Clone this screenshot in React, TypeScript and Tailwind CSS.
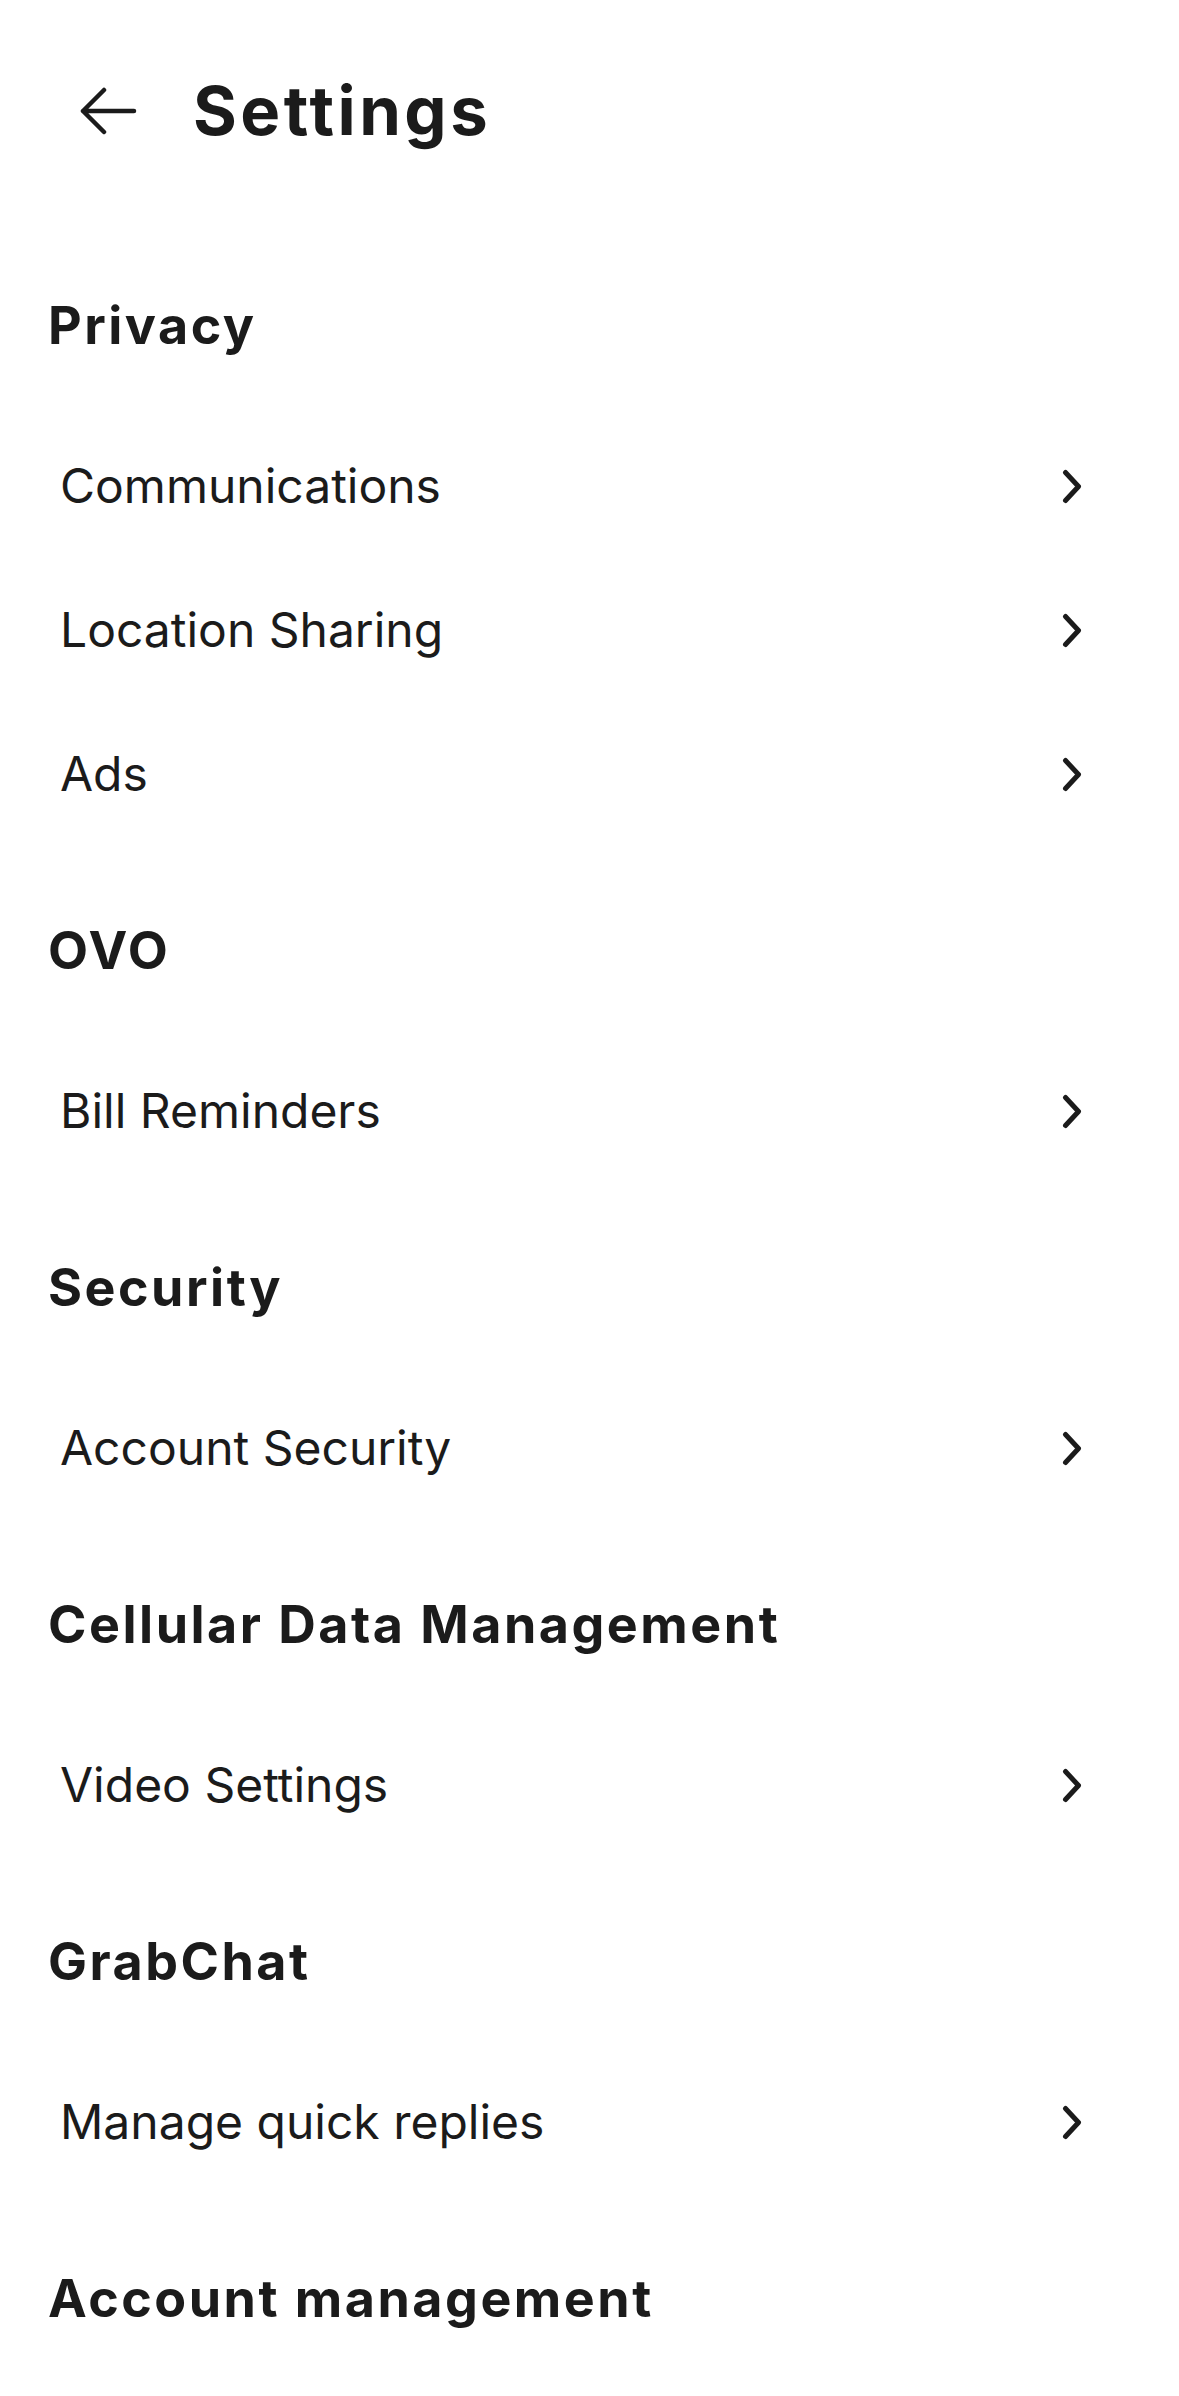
import { useState } from "react";

type Section = { title: string; items: string[] };

const sections: Section[] = [
  { title: "Privacy", items: ["Communications", "Location Sharing", "Ads"] },
  { title: "OVO", items: ["Bill Reminders"] },
  { title: "Security", items: ["Account Security"] },
  { title: "Cellular Data Management", items: ["Video Settings"] },
  { title: "GrabChat", items: ["Manage quick replies"] },
  { title: "Account management", items: [] },
];

function BackArrow() {
  return (
    <svg width="58" height="48" viewBox="0 0 58 48" fill="none" className="shrink-0">
      <path
        d="M55 24H4M4 24L25 3M4 24L25 45"
        stroke="currentColor"
        strokeWidth="4.5"
        strokeLinecap="round"
        strokeLinejoin="round"
      />
    </svg>
  );
}

function Chevron() {
  return (
    <svg width="20" height="35" viewBox="0 0 20 35" fill="none" className="shrink-0">
      <path
        d="M3.5 3.5L16.5 17.5L3.5 31.5"
        stroke="currentColor"
        strokeWidth="5"
        strokeLinecap="round"
        strokeLinejoin="round"
      />
    </svg>
  );
}

export default function App() {
  const [pressed, setPressed] = useState<string | null>(null);

  return (
    <div className="min-h-screen w-full bg-white text-[#1b1b1b] font-['Inter','Noto_Sans',sans-serif]">
      {/* Header */}
      <div className="h-[221px] flex items-center pl-[79px]">
        <button className="text-[#1b1b1b]">
          <BackArrow />
        </button>
        <h1 className="ml-[56px] text-[67px] font-bold leading-none tracking-[3.5px]">Settings</h1>
      </div>

      {sections.map((s) => (
        <div key={s.title} className="pt-[73px]">
          <h2 className="h-[64px] leading-[64px] pl-[48px] mb-[56px] text-[52px] font-bold tracking-[2.5px]">
            {s.title}
          </h2>
          {s.items.map((item) => (
            <button
              key={item}
              onClick={() => setPressed(item)}
              className={`w-full h-[144px] flex items-center justify-between pl-[60px] pr-[97px] text-left ${
                pressed === item ? "bg-gray-50" : ""
              }`}
            >
              <span className="text-[48px] font-normal">{item}</span>
              <Chevron />
            </button>
          ))}
        </div>
      ))}
    </div>
  );
}
